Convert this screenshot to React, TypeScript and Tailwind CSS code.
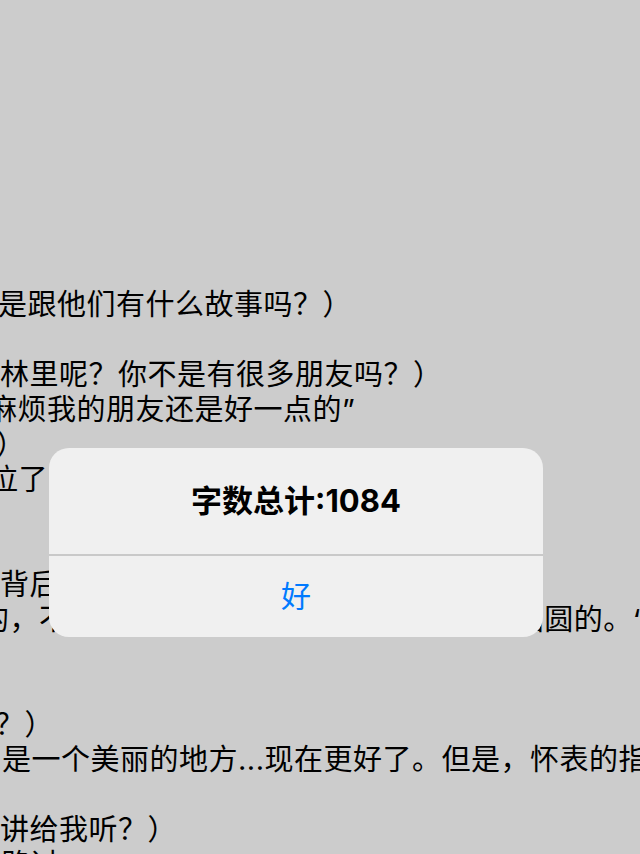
const lines: { text: string; shift: string }[] = [
  { text: "是跟他们有什么故事吗？）", shift: "ml-[-2px]" },
  { text: "", shift: "" },
  { text: "林里呢？你不是有很多朋友吗？）", shift: "ml-0" },
  { text: "麻烦我的朋友还是好一点的”", shift: "ml-[-12px]" },
  { text: "）", shift: "ml-[-4px]" },
  { text: "泣了...", shift: "ml-[-11px]" },
  { text: "", shift: "" },
  { text: "", shift: "" },
  { text: "背后", shift: "ml-0" },
];

const linesAfter: { text: string; shift: string }[] = [
  { text: "", shift: "" },
  { text: "", shift: "" },
  { text: "？）", shift: "ml-[-5px]" },
  { text: "是一个美丽的地方...现在更好了。但是，怀表的指针", shift: "ml-[2px]" },
  { text: "", shift: "" },
  { text: "讲给我听？）", shift: "ml-0" },
  { text: "“路过”", shift: "ml-[-12px]" },
];

function Line({ text, shift }: { text: string; shift: string }) {
  return <div className={`h-[35px] whitespace-nowrap ${shift}`}>{text}</div>;
}

export default function App() {
  return (
    <div
      className="relative h-[854px] w-[640px] overflow-hidden bg-[#cccccc] text-black"
      style={{ fontFamily: 'Inter, "Noto Sans CJK SC", sans-serif' }}
    >
      {/* note text behind the alert */}
      <div className="flex flex-col pt-[287px] text-[29px] leading-[35px] tracking-[0.5px]">
        {lines.map((l, i) => (
          <Line key={i} {...l} />
        ))}
        <div className="flex h-[35px] justify-between whitespace-nowrap">
          <span className="ml-[-20px]">的，不知道</span>
          <span className="mr-[-6px]">圆圆的。“</span>
        </div>
        {linesAfter.map((l, i) => (
          <Line key={i} {...l} />
        ))}
      </div>

      {/* alert */}
      <div className="absolute left-[49px] top-[448px] flex h-[189px] w-[494px] flex-col overflow-hidden rounded-[20px] bg-[#f0f0f0]">
        <div className="flex h-[106px] items-center justify-center text-[31px] font-bold">
          字数总计:1084
        </div>
        <div className="h-[2px] bg-[#c9c9c9]" />
        <div className="flex flex-1 items-center justify-center text-[30px] text-[#007aff]">好</div>
      </div>
    </div>
  );
}
